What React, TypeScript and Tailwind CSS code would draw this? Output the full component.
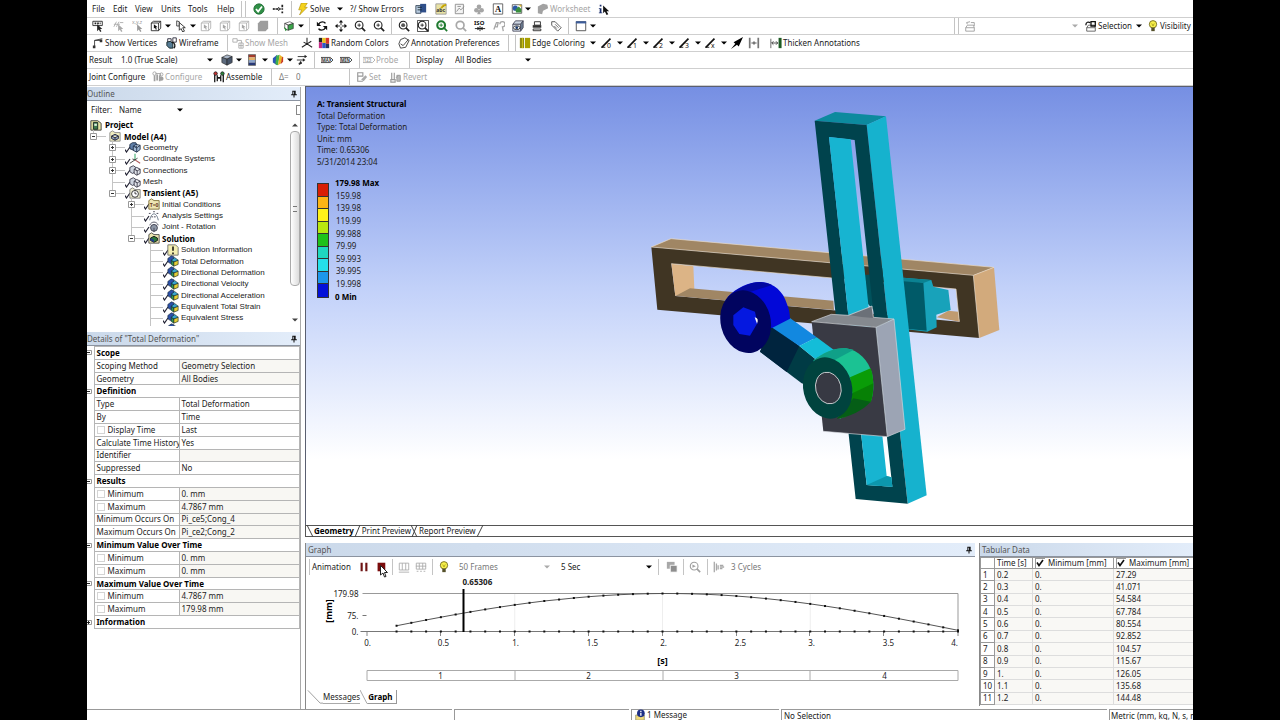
import React from "react";

type IconName = keyof typeof art;

const cube = (top: string, left: string, right: string) => (
  <>
    <path d="M2 4 L8 2 L12 4 L6 6Z" fill={top} stroke="#222" strokeWidth=".7" />
    <path d="M2 4 L6 6 V12 L2 10Z" fill={left} stroke="#222" strokeWidth=".7" />
    <path d="M6 6 L12 4 V10 L6 12Z" fill={right} stroke="#222" strokeWidth=".7" />
  </>
);
const wireBox = (c: string, fill: string) => (
  <>
    <path d="M1.500 3.500 L4 1.500 H12.500 V9.500 L10 12.500 H1.500Z M1.500 3.500 H10 V12.500 M10 3.500 L12.500 1.500" fill="none" stroke={c} />
    <path d="M4.500 5 L9 8.500 H7 L8 11 L6.500 11 L6 9 L4.500 10Z" fill={fill} />
  </>
);
const lens = (c: string, w: number, plus: boolean) => (
  <>
    <circle cx="6" cy="6" r="4.500" fill="none" stroke={c} strokeWidth={w} />
    <path d="M9 9 L13 13" stroke={c} strokeWidth="2" />
    {plus && <path d="M4 6 H8 M6 4 V8" stroke={c} />}
  </>
);
const cursor = (c: string) => <path d="M6 5 V13 L8 11 L9.500 14 L11 13 L9.500 10.500 H12Z" fill={c} />;
const slash = (n: string) => (
  <>
    <path d="M1 12 L11 2" stroke="#111" strokeWidth="2" />
    <path d="M0 12 H5" stroke="#111" />
    <text x="7" y="13" fontSize="8" fill="#111">{n}</text>
  </>
);
const tag = (label: string, c: string) => (
  <>
    <path d="M0 4 H11 L14 7 L11 10 H0Z" fill="#fff" stroke={c} />
    <text x="1" y="9" fontSize="5" fontWeight="700" fill={c}>{label}</text>
  </>
);
const solver = (c: string, d: string) => (
  <>
    <path d="M3 5 V12 M6 4 V11 M9 5 V12" stroke={c} strokeWidth="2" />
    <circle cx="3" cy="3" r="2" fill="#fff" stroke={c} />
    <path d="M4 3 H10 V6" stroke={c} fill="none" />
    <circle cx="11" cy="9" r="2.500" fill={d} />
    <circle cx="11" cy="4" r="1.800" fill="none" stroke={c} />
  </>
);

const art = {
  check: (
    <>
      <circle cx="7" cy="7" r="6" fill="#2f8f46" stroke="#1c6a31" />
      <path d="M3.500 7 L6 10 L10.500 4" stroke="#fff" strokeWidth="2" fill="none" />
    </>
  ),
  nodes: (
    <>
      <path d="M1 7 H10 M10 7 L7 5 M10 7 L7 9" stroke="#222" fill="none" />
      <path d="M1 6h2v2H1z M5 6h2v2H5z M11 2h2v3h-2z M11 6h2v2h-2z M11 10h2v2h-2z" fill="#222" />
    </>
  ),
  bolt: <path d="M5 0 H12 L9 5 H12 L3 14 L5.500 8 H2Z" fill="#f5d21c" stroke="#a98a00" strokeWidth=".7" />,
  newSection: (
    <>
      <path d="M1 3 H7 V12 H1Z" fill="#b8cbe0" stroke="#345" />
      <path d="M6 1 H13 V11 H6Z" fill="#2f4f8a" />
      <path d="M3 5 H8 M3 8 H8" stroke="#122" />
    </>
  ),
  comment: (
    <>
      <path d="M1 1 H13 V13 H1Z" fill="#e8e2a4" stroke="#999" />
      <text x="1.500" y="10" fontSize="6" fontWeight="700" fill="#333">abc</text>
      <path d="M7 6 L10 3 L13 2" stroke="#c9a800" strokeWidth="2" />
    </>
  ),
  figure: (
    <>
      <path d="M1.500 1.500 H11 V12.500 H1.500Z" fill="#f4f4f4" stroke="#888" />
      <path d="M3 10 L6 6 L8 8 L12 4 M4 4 H8" stroke="#888" fill="none" />
    </>
  ),
  clover: (
    <>
      <circle cx="7" cy="4.500" r="2.700" fill="#a5a5a5" />
      <circle cx="4" cy="8.500" r="2.700" fill="#a5a5a5" />
      <circle cx="10" cy="8.500" r="2.700" fill="#a5a5a5" />
      <path d="M6.300 8 H7.700 L9 13 H5Z" fill="#a5a5a5" />
    </>
  ),
  letterA: (
    <>
      <path d="M1.500 1 V13 H12.500 V1Z" fill="#fff" stroke="#555" />
      <text x="3.500" y="10.500" fontSize="10" fontWeight="700" fontFamily="Liberation Serif" fill="#111">A</text>
    </>
  ),
  image: (
    <>
      <path d="M1.500 2 H12.500 V12 H1.500Z" fill="#fff" stroke="#555" />
      <circle cx="5" cy="6" r="3" fill="#2c59a8" />
      <path d="M5 8 L9 4 L12 7 V11 H6Z" fill="#3a8f3e" />
      <path d="M9 2 H12 V5Z" fill="#e0b92d" />
    </>
  ),
  worksheet: <path d="M1 4 L7 1 L12 2 L13 6 L7 9 L6 13 L1 12Z" fill="#a2a2a2" />,
  info: (
    <>
      <path d="M2 2 h2 v2 h-2z M1 6 h3 v5 h1 v1 H1 v-1 h1 V7 H1z" fill="#1b2f6e" />
      <path d="M6 3 V12 L8 10 L10 14 L12 13 L10 9.500 H13Z" fill="#111" />
    </>
  ),
  rst: (
    <>
      <path d="M1 1.500 H12 V6.500 H1Z" fill="#fff" stroke="#222" />
      <path d="M3 4 H10" stroke="#222" strokeWidth="2" strokeDasharray="2 1" />
      {cursor("#222")}
    </>
  ),
  hash: (
    <>
      <path d="M1 8 L4 2 M4 8 L7 2 M1 5 H8 M8 3 H12" stroke="#aaa" />
      {cursor("#aaa")}
    </>
  ),
  xyz: (
    <>
      <text x="0" y="5" fontSize="6" fill="#999">x,y,z</text>
      {cursor("#999")}
    </>
  ),
  boxCursor: wireBox("#222", "#111"),
  boxGray: wireBox("#b0b0b0", "#a5a5a5"),
  bodyGray: <path d="M1 4 L4 1 H13 V10 L10 13 H1Z" fill="#9d9d9d" />,
  pointer: (
    <>
      <path d="M2 1 V7 H5 V2Z" fill="none" stroke="#333" />
      <path d="M5 3 V12 L7 10 L9 14 L11 13 L9 9 H12Z" fill="#fff" stroke="#222" />
    </>
  ),
  greenBox: (
    <>
      {cube("#fff", "#fff", "#3aa54a")}
      <path d="M1 8 L5 11 L3 13Z" fill="#2e8b3a" />
    </>
  ),
  rotate: (
    <>
      <path d="M3 5 C5 1 10 2 11 4 M11 9 C9 13 4 12 3 10" stroke="#111" strokeWidth="1.600" fill="none" />
      <path d="M1 2 V7 H6Z M13 12 V7 H8Z" fill="#111" />
    </>
  ),
  move: (
    <>
      <path d="M7 1 V13 M1 7 H13" stroke="#111" strokeDasharray="5 2" />
      <path d="M7 0 L9.500 3 H4.500Z M7 14 L9.500 11 H4.500Z M0 7 L3 4.500 V9.500Z M14 7 L11 4.500 V9.500Z" fill="#111" />
    </>
  ),
  zoomPlus: lens("#222", 1.300, true),
  zoomFit: (
    <>
      {lens("#222", 1.300, false)}
      <circle cx="6" cy="6" r="2.300" fill="#555" />
    </>
  ),
  zoomBox: (
    <>
      <path d="M.5 .5 H13.500 V13.500 H.5Z" fill="none" stroke="#333" />
      {lens("#222", 1.300, true)}
    </>
  ),
  zoomGreen: lens("#1f7a2f", 2.500, true),
  zoomGray: lens("#a8a8a8", 2, false),
  iso: (
    <>
      <text x="0" y="6" fontSize="7" fontWeight="700" fill="#111">ISO</text>
      <path d="M1 10 H13 M7 7 V13" stroke="#111" />
      <path d="M4 8 L7 10 L4 12Z M10 8 L7 10 L10 12Z" fill="#111" />
    </>
  ),
  eyes: <path d="M1 11 L4 3 H6 L5 8 H3 M8 5 A3 3 0 1 1 11 8 L12 13" fill="none" stroke="#a5a5a5" strokeWidth="1.500" />,
  cubeEye: (
    <>
      <path d="M1 5 L4 1 H13 L10 5Z" fill="#cfd8e4" stroke="#445" />
      <path d="M10 5 L13 1 V9 L10 13Z" fill="#6f8296" stroke="#445" />
      <path d="M1 5 H10 V13 H1Z" fill="#dfe8f2" stroke="#445" />
      <ellipse cx="5.500" cy="9" rx="3.800" ry="2.200" fill="#fff" stroke="#222" />
      <circle cx="5.500" cy="9" r="1.600" fill="#1d3b6e" />
    </>
  ),
  printer: (
    <>
      <path d="M4 2 H11 V6 H4Z" fill="#fff" stroke="#222" />
      <path d="M2 6 H12 V9 H2Z" fill="#333" />
      <path d="M2.500 10.500 H11.500 V12.500 H2.500Z" fill="#fff" stroke="#222" />
    </>
  ),
  label: (
    <>
      <path d="M2 2 L6 2 L13 9 L9 13 L2 6Z" fill="#fff" stroke="#444" />
      <path d="M6 5 L10 9 M5 7 L8 10" stroke="#666" />
    </>
  ),
  win: (
    <>
      <path d="M1.500 2 H12.500 V12.500 H1.500Z" fill="#fff" stroke="#444" />
      <path d="M1 1.500 H13 V4 H1Z" fill="#3c5c9a" />
    </>
  ),
  pick: <path d="M2 9 H12 V13 H2Z M2 9 L4 6 H11 L12 9 M4 5 L3 3 L7 2 M8 3 H12 V7" fill="none" stroke="#999" />,
  pickDark: (
    <>
      <path d="M2 9 H12 V13 H2Z M2 9 L4 6 H11 L12 9" fill="#fff" stroke="#555" />
      <path d="M1 6 C1 2 4 2 6 3 M7 2 H12 V7 H7Z" fill="none" stroke="#111" strokeWidth="1.500" />
    </>
  ),
  bulb: (
    <>
      <circle cx="7" cy="5" r="4.300" fill="#f7f04a" stroke="#6b6420" />
      <path d="M5 9 H9 V13 H5Z" fill="#55512a" />
      <path d="M5.500 4 L7 7 L8.500 4" fill="none" stroke="#a99f1e" />
    </>
  ),
  vertex: (
    <>
      <path d="M3 11 V4 H11 M3 4 L12 2" fill="none" stroke="#333" />
      <path d="M1 10h3v3H1z M9 3h3v3H9z" fill="#333" />
    </>
  ),
  wire: (
    <>
      <path d="M2 2 h4 v4 h-4z M8 1 h4 v5 h-4z" fill="none" stroke="#223" />
      <path d="M1 6 L5 5 L8 8 V13 H4 L1 10Z" fill="#557b94" stroke="#122" />
      <path d="M7 6 A4 4 0 0 1 9 13" fill="none" stroke="#111" strokeWidth="1.500" />
    </>
  ),
  mesh: <path d="M1 2 h5 v4 h-5z M8 7 h5 v6 h-5z M8 10 h5 M10.500 7 v6 M6 4 h5 v3" fill="none" stroke="#aaa" />,
  axes: <path d="M7 1 V8 L1 12 M7 8 L13 12 M3 6 L7 8 L12 5" fill="none" stroke="#222" strokeWidth="1.200" />,
  colors: (
    <>
      <path d="M1 1h4v5H1z" fill="#222" />
      <path d="M5 1h4v6H5z" fill="#e8c51c" />
      <path d="M9 1h4v7H9z" fill="#d9362b" />
      <path d="M1 6h4v7H1z" fill="#c42d85" />
      <path d="M5 7h4v6H5z" fill="#2d56c9" />
      <path d="M9 8h4v5H9z" fill="#26365e" />
    </>
  ),
  pen: <path d="M3 3 L8 1 L13 4 L9 12 L3 13 L1 8Z M3 8 L6 10 L12 3" fill="none" stroke="#333" />,
  edge: (
    <>
      <path d="M1 1h5v12H1z" fill="#8f8a12" />
      <path d="M7 1h6v12H7z" fill="#a89f00" />
      <path d="M4 1v12" stroke="#d6cb1c" />
    </>
  ),
  s0: slash("0"),
  s1: slash("1"),
  s2: slash("2"),
  s3: slash("3"),
  sx: slash("x"),
  dart: <path d="M0 14 L5 8 L3 6 L14 0 L9 11 L7 9Z" fill="#000" />,
  gap: (
    <>
      <path d="M2 1 V13 M12 1 V13" stroke="#777" strokeWidth="2" />
      <path d="M4 7 H10 M7 5 V9" stroke="#333" />
    </>
  ),
  thick: (
    <>
      <path d="M1 2 V13" stroke="#555" />
      <path d="M2 7 H9" stroke="#333" />
      <path d="M4 5 L2 7 L4 9 M7 5 L9 7 L7 9" stroke="#333" fill="none" />
      <path d="M10 1 H13.500 V13 H10Z" fill="#1d5a23" />
    </>
  ),
  cubeGray: (
    <>
      <path d="M1 4 L7 1 L13 3 L7 6Z" fill="#a9b6c8" stroke="#222" strokeWidth=".7" />
      <path d="M1 4 L7 6 V13 L1 10Z" fill="#5d6b7e" stroke="#222" strokeWidth=".7" />
      <path d="M7 6 L13 3 V10 L7 13Z" fill="#47556a" stroke="#222" strokeWidth=".7" />
    </>
  ),
  bars: (
    <>
      <path d="M3 1h8v3H3z" fill="#a43c2c" />
      <path d="M3 4h8v3H3z" fill="#e2b36b" />
      <path d="M3 7h8v3H3z" fill="#8fa6c8" />
      <path d="M3 10h8v3H3z" fill="#283a78" />
      <path d="M3 .5 H11 V13.500 H3Z" fill="none" stroke="#333" strokeWidth=".7" />
    </>
  ),
  rainbow: (
    <>
      <path d="M1 5 L6 1 L6 13 L1 10Z" fill="#2b57b5" />
      <path d="M5 2 L9 1 L7 13 L4 12Z" fill="#43b049" />
      <path d="M9 1 L13 4 L10 11 L7 13Z" fill="#ecb52a" />
      <path d="M12 3 L13 4 V9 L10 12Z" fill="#c93a22" />
    </>
  ),
  vectors: (
    <>
      <path d="M2 3 H11 M1 7 H9 M3 11 H6 V9" stroke="#222" fill="none" />
      <path d="M10 1 L13 3 L10 5Z M8 5 L11 7 L8 9Z M5 8 L7 11 L3 13Z" fill="#222" />
    </>
  ),
  max: tag("MAX", "#333"),
  min: tag("MIN", "#333"),
  probe: tag("123", "#aaa"),
  cfgGray: solver("#a0a0a0", "#a0a0a0"),
  assemble: (
    <>
      <path d="M2 4 V13 M5 5 V12 M12 4 V13 M9 5 V12" stroke="#222" strokeWidth="1.600" />
      <circle cx="3" cy="3" r="2" fill="#c33" stroke="#222" />
      <circle cx="11" cy="3" r="2" fill="#2a8a3a" stroke="#222" />
      <path d="M5 8 H9" stroke="#111" strokeWidth="2" />
    </>
  ),
  setGray: (
    <>
      <path d="M2 2 H8 V6 H2Z M2 6 V12 H8" fill="none" stroke="#999" strokeWidth="1.300" />
      <path d="M6 10 L11 5 L13 7 L9 12Z" fill="#aaa" />
    </>
  ),
  revert: (
    <>
      <path d="M2 2 V10 M5 2 V10 M1 10 H6 V13 H1Z" stroke="#999" fill="none" strokeWidth="1.300" />
      <path d="M8 5 H12 V12 H8Z M7 8 L10 5" stroke="#999" fill="#bbb" />
    </>
  ),
  project: (
    <>
      <path d="M1 2 H9 L13 5 V13 H1Z" fill="#e5e3a2" stroke="#333" />
      <path d="M4 4 H9 V12 H4Z" fill="#3d7a4c" stroke="#122" />
      <path d="M5 5.500 H8 V8 H5Z" fill="#dff0df" />
    </>
  ),
  model: (
    <>
      <path d="M1 3 L4 1 L7 3 H13 V13 H1Z" fill="#efedc0" stroke="#888" />
      <path d="M3 7 L7 5 L11 7 V10 L7 12 L3 10Z M3 7 L7 9 L11 7 M7 9 V12" fill="#8fa3bd" stroke="#223" />
    </>
  ),
  geom: (
    <>
      <path d="M1 4 L4 2 H8 L9 4 V9 L6 11 L1 9Z" fill="#5f7fa8" stroke="#1b2b45" />
      <path d="M5 6 L8 4 L13 5 V10 L9 13 L5 11Z M5 6 L9 8 L13 5 M9 8 V13" fill="#9fb8d4" stroke="#1b2b45" />
    </>
  ),
  coord: (
    <>
      <path d="M7 1 V8" stroke="#3a6" strokeWidth="1.200" />
      <path d="M7 8 L13 12" stroke="#a55" strokeWidth="1.200" />
      <path d="M7 8 L1 12 M4 7 L7 8 L10 6" stroke="#333" fill="none" />
    </>
  ),
  conn: (
    <>
      <path d="M1 4 L5 2 L8 4 V9 L4 11 L1 9Z" fill="#cdd4df" stroke="#334" />
      <path d="M6 6 L9 4 L13 6 V11 L9 13 L6 11Z M6 6 L9.500 8 L13 6 M9.500 8 V13" fill="#e3e6ec" stroke="#334" />
    </>
  ),
  clock: (
    <>
      <path d="M1 3 L4 1 L7 3 H13 V13 H1Z" fill="#efedd0" stroke="#777" />
      <circle cx="7" cy="8" r="4" fill="#fff" stroke="#222" />
      <path d="M7 5.500 V8 H9" fill="none" stroke="#222" />
    </>
  ),
  initial: (
    <>
      <path d="M1 3 L4 1 L7 3 H13 V13 H1Z" fill="#efe6b4" stroke="#7a6a30" />
      <text x="2" y="11" fontSize="6" fontWeight="700" fill="#6b3a22">T=0</text>
    </>
  ),
  settings: (
    <>
      <path d="M2 12 C4 2 10 2 12 12" fill="none" stroke="#567" />
      <path d="M1 4h3 M6 2h3 M10 4h3 M4 8h6" stroke="#334" strokeDasharray="2 1" />
    </>
  ),
  joint: (
    <>
      <circle cx="7" cy="8" r="4" fill="#8e97a6" stroke="#334" />
      <path d="M2 5 C4 0 10 0 12 5 M7 8 V13" fill="none" stroke="#445" />
    </>
  ),
  solution: (
    <>
      <path d="M1 3 L4 1 L7 3 H13 V13 H1Z" fill="#e9e3b0" stroke="#444" />
      <path d="M3 7 L7 5 L11 7 V10 L7 12 L3 10Z" fill="#2c7a3c" stroke="#111" />
      <path d="M3 7 L7 9 V12 L3 10Z" fill="#24408a" />
    </>
  ),
  note: (
    <>
      <path d="M1 1 H10 L13 4 V13 H1Z" fill="#f3eeb0" stroke="#666" />
      <path d="M7 3 V8 M7 10 V12" stroke="#111" strokeWidth="1.800" />
    </>
  ),
  result: (
    <>
      <path d="M1 4 L5 1 L8 2 V9 L4 10 L1 8Z" fill="#2b50a8" stroke="#123" strokeWidth=".7" />
      <path d="M5 6 L8 8 V13 L5 11Z" fill="#2d9a56" stroke="#122" strokeWidth=".7" />
      <path d="M8 8 L13 6 V11 L8 13Z" fill="#e4cf36" stroke="#122" strokeWidth=".7" />
      <path d="M5 6 L9 3 L13 6 L8 8Z" fill="#38a6cf" stroke="#122" strokeWidth=".7" />
    </>
  ),
  pin: <path d="M4 2 H10 M5 2 V8 M9 2 V8 M8 2 V8 M2 8.500 H12 M7 9 V13" stroke="#111" strokeWidth="1.800" fill="none" />,
  pause: <path d="M3 2 H5.500 V12 H3Z M8.500 2 H11 V12 H8.500Z" fill="#6e1414" />,
  stop: <path d="M3 2 H12 V12 H3Z" fill="#7a0c0c" />,
  frames: <path d="M1.500 2.500 H12.500 V10.500 H1.500Z M5 2.500 V10.500 M9 2.500 V10.500 M1 13 H13" fill="none" stroke="#aaa" />,
  frames2: <path d="M1.500 2.500 H12.500 V9.500 H1.500Z M5 2.500 V9.500 M9 2.500 V9.500 M1 6 H13 M2 12 H4 M6 12 H8 M10 12 H12" fill="none" stroke="#aaa" />,
  export: (
    <>
      <path d="M1 1h9v8H1z" fill="#a8a8a8" />
      <path d="M5 5h8v8H5z" fill="#8e8e8e" stroke="#fff" />
    </>
  ),
  zoomTime: (
    <>
      {lens("#a0a0a0", 1.300, false)}
      <path d="M4 4 L8 6 L4 8Z" fill="#a0a0a0" />
    </>
  ),
  cycles: <path d="M1.500 1 V13 M4 3 V11 M6 5 V10 M8 5 H12 M8 7 H13 M8 9 H11" stroke="#a8a8a8" strokeWidth="1.500" />,
  message: (
    <>
      <path d="M2 7 H12 V13 H2Z" fill="#f0d878" stroke="#997" />
      <circle cx="8" cy="5" r="4.500" fill="#1d2f86" />
      <path d="M8 2 V3.500 M8 4.500 V8" stroke="#fff" strokeWidth="1.500" />
    </>
  ),
};

const Icon = ({ name, className = "size-3" }: { name: IconName; className?: string }) => (
  <svg viewBox="0 0 14 14" className={`${className} shrink-0`} aria-hidden="true">{art[name]}</svg>
);

const Caret = ({ className = "text-black" }: { className?: string }) => (
  <svg viewBox="0 0 6 4" className={`h-1 w-1.5 shrink-0 ${className}`} aria-hidden="true">
    <path d="M0 .5 H6 L3 3.500Z" fill="currentColor" />
  </svg>
);

const Sep = ({ w = "w-1" }: { w?: string }) => (
  <span className={`flex shrink-0 justify-center ${w}`}>
    <span className="h-4 w-px bg-[#c4c4c4]" />
  </span>
);

// Fixed-width toolbar cell: optional icon followed by an optional caption.
const Tool = ({ w = "w-[19px]", icon, text, label, off = false }: { w?: string; icon?: IconName; text?: string; label?: string; off?: boolean }) => (
  <button
    type="button"
    aria-label={label ?? text ?? icon}
    disabled={off}
    className={`flex h-4 shrink-0 items-center whitespace-nowrap ${text ? "gap-px" : "justify-center"} ${off ? "text-[#a6a6a6]" : "text-[#222]"} ${w}`}
  >
    {icon && <Icon name={icon} />}
    {text}
  </button>
);

const Drop = ({ w = "w-2.5", off = false }: { w?: string; off?: boolean }) => (
  <button type="button" aria-label="More options" className={`flex h-4 shrink-0 items-center justify-center ${w}`}>
    <Caret className={off ? "text-[#aaa]" : "text-black"} />
  </button>
);

const Bar = ({ children }: { children: React.ReactNode }) => (
  <div className="flex h-[17px] items-center overflow-hidden border-b border-[#cfcfcf] bg-white text-[8px]">{children}</div>
);

const Toolbars = () => (
  <header className="shrink-0 bg-white pt-px">
    <Bar>
      <nav className="flex w-[152px] shrink-0 pl-[5px]">
        <button type="button" className="w-[21px] text-left">File</button>
        <button type="button" className="w-[22px] text-left">Edit</button>
        <button type="button" className="w-[26px] text-left">View</button>
        <button type="button" className="w-[27px] text-left">Units</button>
        <button type="button" className="w-[29px] text-left">Tools</button>
        <button type="button" className="text-left">Help</button>
      </nav>
      <Sep w="w-1" />
      <Sep w="w-1" />
      <Tool w="w-6" icon="check" label="Status" />
      <Tool w="w-3.5" icon="nodes" label="Connections" />
      <Sep w="w-3" />
      <Tool w="w-[39px]" icon="bolt" text="Solve" />
      <Drop w="w-2" />
      <span className="w-1.5 shrink-0" />
      <Tool w="w-[61px]" text="?/ Show Errors" />
      <Tool w="w-5" icon="newSection" label="New section plane" />
      <Tool icon="comment" label="Comment" />
      <Tool icon="figure" label="Figure" />
      <Tool icon="clover" label="Clover" />
      <Tool icon="letterA" label="Annotation" />
      <Tool icon="image" label="Image" />
      <Drop w="w-1" />
      <span className="w-[7px] shrink-0" />
      <Tool w="w-[61px]" icon="worksheet" text="Worksheet" off />
      <Tool w="w-3" icon="info" label="Selection information" />
    </Bar>
    <Bar>
      <Tool w="w-[22px]" icon="rst" label="Named selection" />
      <Tool icon="hash" label="Select by number" off />
      <Tool icon="xyz" label="Coordinates" off />
      <Tool w="w-[18px]" icon="boxCursor" label="Select mode" />
      <Drop w="w-1.5" />
      <Tool icon="pointer" label="Pointer" />
      <Drop w="w-1.5" />
      <Tool icon="boxGray" label="Vertex" off />
      <Tool icon="boxGray" label="Edge" off />
      <Tool icon="boxGray" label="Face" off />
      <Tool icon="bodyGray" label="Body" off />
      <Sep w="w-2.5" />
      <Tool w="w-3.5" icon="greenBox" label="Extend selection" />
      <Drop />
      <Sep w="w-1.5" />
      <Tool icon="rotate" label="Rotate" />
      <Tool icon="move" label="Pan" />
      <Tool icon="zoomPlus" label="Zoom" />
      <Tool icon="zoomPlus" label="Box zoom" />
      <Sep w="w-1.5" />
      <Tool icon="zoomFit" label="Zoom to fit" />
      <Tool icon="zoomBox" label="Magnifier" />
      <Tool icon="zoomGreen" label="Previous view" />
      <Tool icon="zoomGray" label="Next view" off />
      <Tool icon="iso" label="Isometric view" />
      <Tool icon="eyes" label="Look at" off />
      <Tool icon="cubeEye" label="Manage views" />
      <Tool icon="printer" label="Rescale" />
      <Tool icon="label" label="Tags" />
      <Sep w="w-1.5" />
      <Tool icon="win" label="Viewports" />
      <Drop w="w-1.5" />
      <span className="grow" />
      <div className="flex w-[241px] shrink-0 items-center">
        <Sep />
        <Sep />
        <Tool icon="pick" label="Pick" off />
        <span className="w-[92px] shrink-0" />
        <Drop w="w-2" off />
        <span className="w-1.5 shrink-0" />
        <Tool w="w-[50px]" icon="pickDark" text="Selection" />
        <Drop w="w-2" />
        <span className="w-1 shrink-0" />
        <Tool w="w-11" icon="bulb" text="Visibility" />
      </div>
    </Bar>
    <Bar>
      <span className="w-[5px] shrink-0" />
      <Tool w="w-[74px]" icon="vertex" text="Show Vertices" />
      <Tool w="w-[57px]" icon="wire" text="Wireframe" />
      <Sep w="w-[9px]" />
      <Tool w="w-[64px]" icon="mesh" text="Show Mesh" off />
      <Tool w="w-[22px]" icon="axes" label="Axes" />
      <Tool w="w-[80px]" icon="colors" text="Random Colors" />
      <Tool w="w-[106px]" icon="pen" text="Annotation Preferences" />
      <Sep w="w-[8px]" />
      <Sep w="w-[7px]" />
      <Tool w="w-[70px]" icon="edge" text="Edge Coloring" />
      <Drop w="w-[8px]" />
      <Tool w="w-5" icon="s0" label="Edges free" />
      <Drop w="w-1.5" />
      <Tool w="w-5" icon="s1" label="Edges single" />
      <Drop w="w-1.5" />
      <Tool w="w-5" icon="s2" label="Edges double" />
      <Drop w="w-1.5" />
      <Tool w="w-5" icon="s3" label="Edges triple" />
      <Drop w="w-1.5" />
      <Tool w="w-5" icon="sx" label="Edges multiple" />
      <Drop w="w-1.5" />
      <Tool icon="dart" label="Direction" />
      <Tool w="w-4" icon="gap" label="Spacing" />
      <span className="w-2 shrink-0" />
      <Tool w="w-[110px]" icon="thick" text="Thicken Annotations" />
    </Bar>
    <Bar>
      <span className="w-8 shrink-0 pl-0.5">Result</span>
      <span className="w-[84px] shrink-0 pl-0.5">1.0 (True Scale)</span>
      <Drop w="w-[14px]" />
      <Tool icon="cubeGray" label="Geometry" />
      <Drop w="w-[6px]" />
      <Tool w="w-5" icon="bars" label="Contours" />
      <Drop w="w-[6px]" />
      <Tool w="w-5" icon="rainbow" label="Edges" />
      <Drop w="w-[4px]" />
      <Tool icon="vectors" label="Vectors" />
      <Sep w="w-[6px]" />
      <Tool icon="max" label="Maximum" />
      <Tool icon="min" label="Minimum" />
      <Sep w="w-2" />
      <Tool w="w-[43px]" icon="probe" text="Probe" off />
      <Sep w="w-1.5" />
      <label htmlFor="display" className="w-[39px] shrink-0 pl-1">Display</label>
      <span className="grid w-[84px] shrink-0 items-center">
        <select id="display" className="col-start-1 row-start-1 appearance-none bg-transparent pl-1">
          <option>All Bodies</option>
        </select>
        <span className="pointer-events-none col-start-1 row-start-1 justify-self-end pr-1"><Caret /></span>
      </span>
    </Bar>
    <Bar>
      <span className="w-[65px] shrink-0 pl-0.5">Joint Configure</span>
      <Tool w="w-[61px]" icon="cfgGray" text="Configure" off />
      <Tool w="w-[54px]" icon="assemble" text="Assemble" />
      <Sep w="w-[8px]" />
      <label htmlFor="delta" className="w-[21px] shrink-0 pl-1 text-[#777]">Δ=</label>
      <input id="delta" defaultValue="0" className="w-[50px] shrink-0 text-[#777] outline-none" />
      <Sep w="w-[6px]" />
      <span className="w-1 shrink-0" />
      <Tool w="w-[34px]" icon="setGray" text="Set" off />
      <Tool w="w-[50px]" icon="revert" text="Revert" off />
    </Bar>
  </header>
);

const PanelTitle = ({ children, pin = true, pad = "pl-0.5" }: { children: React.ReactNode; pin?: boolean; pad?: string }) => (
  <h2 className={`flex h-[14px] shrink-0 items-center justify-between overflow-hidden whitespace-nowrap border-b border-[#8b93a0] bg-linear-to-r from-[#cbd9ea] to-[#e3edfa] pr-0.5 text-[8px] text-[#555] ${pad}`}>
    {children}
    {pin && <Icon name="pin" className="size-2" />}
  </h2>
);

type Node = { depth: number; icon: IconName; text: string; box?: "+" | "-"; bold?: boolean; last?: boolean };
const tree: Node[] = [
  { depth: 0, icon: "project", text: "Project", bold: true },
  { depth: 1, icon: "model", text: "Model (A4)", box: "-", bold: true, last: true },
  { depth: 2, icon: "geom", text: "Geometry", box: "+" },
  { depth: 2, icon: "coord", text: "Coordinate Systems", box: "+" },
  { depth: 2, icon: "conn", text: "Connections", box: "+" },
  { depth: 2, icon: "conn", text: "Mesh" },
  { depth: 2, icon: "clock", text: "Transient (A5)", box: "-", bold: true, last: true },
  { depth: 3, icon: "initial", text: "Initial Conditions", box: "+" },
  { depth: 3, icon: "settings", text: "Analysis Settings" },
  { depth: 3, icon: "joint", text: "Joint - Rotation" },
  { depth: 3, icon: "solution", text: "Solution", box: "-", bold: true, last: true },
  { depth: 4, icon: "note", text: "Solution Information" },
  { depth: 4, icon: "result", text: "Total Deformation" },
  { depth: 4, icon: "result", text: "Directional Deformation" },
  { depth: 4, icon: "result", text: "Directional Velocity" },
  { depth: 4, icon: "result", text: "Directional Acceleration" },
  { depth: 4, icon: "result", text: "Equivalent Total Strain" },
  { depth: 4, icon: "result", text: "Equivalent Stress" },
  { depth: 4, icon: "result", text: "" },
];

const TreeRow = ({ n }: { n: Node }) => (
  <li className="flex min-h-0 items-center whitespace-nowrap">
    {Array.from({ length: n.depth }, (_, i) => (
      <svg key={i} viewBox="0 0 19 12" className="h-3 w-[19px] shrink-0" aria-hidden="true">
        {i === n.depth - 1 && (
          <>
            <path d={n.last ? "M6.500 0 V6" : "M6.500 0 V12"} stroke="#c4c4c4" />
            <path d="M6 6.500 H19" stroke="#c4c4c4" />
            {n.box && (
              <>
                <path d="M3.500 3.500 H9.500 V9.500 H3.500Z" fill="#fff" stroke="#999" />
                <path d={n.box === "+" ? "M5 6.500 H8 M6.500 5 V8" : "M5 6.500 H8"} stroke="#333" />
              </>
            )}
          </>
        )}
      </svg>
    ))}
    <svg viewBox="0 0 18 12" className="h-3 w-[18px] shrink-0" aria-hidden="true">
      {n.depth > 1 && <path d="M0 8.500 L1.500 11 L5 6" fill="none" stroke="#223" strokeWidth="1.200" />}
      <svg x={n.depth > 1 ? 4 : 3} y="0" width="12" height="12" viewBox="0 0 14 14">{art[n.icon]}</svg>
    </svg>
    <span className={n.bold ? "font-bold text-black" : "font-['Liberation_Sans',Arial,sans-serif] text-[#222]"}>{n.text}</span>
  </li>
);

const Outline = () => (
  <section className="flex h-[245px] shrink-0 flex-col border-r border-[#aaa] bg-white">
    <PanelTitle pad="">Outline</PanelTitle>
    <div className="flex h-[18px] shrink-0 items-center pl-1 text-[8px]">
      <label htmlFor="filter" className="w-7">Filter:</label>
      <span className="grid w-16 items-center">
        <select id="filter" className="col-start-1 row-start-1 appearance-none bg-transparent">
          <option>Name</option>
        </select>
        <span className="pointer-events-none col-start-1 row-start-1 justify-self-end"><Caret /></span>
      </span>
      <span className="grow" />
      <span className="h-2.5 w-1 border-y border-l border-[#888]" />
    </div>
    <div className="flex h-[207px] overflow-hidden">
      <ul className="grid h-[216px] flex-1 auto-rows-fr overflow-hidden text-[8px] leading-[11px]">
        {tree.map((n, i) => <TreeRow key={i} n={n} />)}
      </ul>
      <div className="flex w-2.5 flex-col items-center justify-between py-1" aria-hidden="true">
        <Caret className="rotate-180 text-[#444]" />
        <span className="mb-8 mt-1 flex w-full flex-1 items-center justify-center rounded-sm border border-[#aaa] bg-linear-to-r from-white to-[#dcdcdc]">
          <span className="h-1.5 w-1 border-y border-[#777]" />
        </span>
        <Caret className="text-[#444]" />
      </div>
    </div>
  </section>
);

type Detail = { head: string; box: "+" | "-" } | { k: string; v: string; tick?: boolean; dim?: boolean };
const details: Detail[] = [
  { head: "Scope", box: "-" },
  { k: "Scoping Method", v: "Geometry Selection", dim: true },
  { k: "Geometry", v: "All Bodies", dim: true },
  { head: "Definition", box: "-" },
  { k: "Type", v: "Total Deformation" },
  { k: "By", v: "Time" },
  { k: "Display Time", v: "Last", tick: true },
  { k: "Calculate Time History", v: "Yes" },
  { k: "Identifier", v: "", dim: true },
  { k: "Suppressed", v: "No" },
  { head: "Results", box: "-" },
  { k: "Minimum", v: "0. mm", tick: true, dim: true },
  { k: "Maximum", v: "4.7867 mm", tick: true, dim: true },
  { k: "Minimum Occurs On", v: "Pi_ce5;Cong_4", dim: true },
  { k: "Maximum Occurs On", v: "Pi_ce2;Cong_2", dim: true },
  { head: "Minimum Value Over Time", box: "-" },
  { k: "Minimum", v: "0. mm", tick: true, dim: true },
  { k: "Maximum", v: "0. mm", tick: true, dim: true },
  { head: "Maximum Value Over Time", box: "-" },
  { k: "Minimum", v: "4.7867 mm", tick: true, dim: true },
  { k: "Maximum", v: "179.98 mm", tick: true, dim: true },
  { head: "Information", box: "+" },
];

const Details = () => (
  <section className="flex-1 border-r border-[#aaa] bg-white">
    <PanelTitle pad="">Details of "Total Deformation"</PanelTitle>
    <table className="h-[283px] w-full table-fixed border-collapse text-[8px] leading-[10px] text-[#222]">
      <colgroup>
        <col className="w-[7px]" />
        <col className="w-[85px]" />
        <col />
      </colgroup>
      <tbody>
        {details.map((d, i) =>
          "head" in d ? (
            <tr key={i}>
              <td className="p-0">
                <button type="button" aria-label={`Toggle ${d.head}`} className="block size-[5px]">
                  <svg viewBox="0 0 5 5" className="size-[5px]" aria-hidden="true">
                    <path d="M0 .5 H4.500 V4.500 H0" fill="none" stroke="#999" />
                    <path d={d.box === "+" ? "M0 2.500 H3 M1.500 1 V4" : "M0 2.500 H3"} stroke="#222" />
                  </svg>
                </button>
              </td>
              <td colSpan={2} className="border border-[#b5b5b5] p-0 pl-0.5 font-bold text-black">{d.head}</td>
            </tr>
          ) : (
            <tr key={i}>
              <td className="p-0" />
              <td className="overflow-hidden whitespace-nowrap border border-[#b5b5b5] p-0 pl-0.5">
                {d.tick ? (
                  <label className="flex items-center gap-[3px]">
                    <input type="checkbox" className="size-2 appearance-none border border-[#d4d4d4] bg-white" />
                    {d.k}
                  </label>
                ) : d.k}
              </td>
              <td className={`border border-[#b5b5b5] p-0 pl-0.5 ${d.dim ? "bg-[#f8f7f3]" : "bg-white"}`}>{d.v}</td>
            </tr>
          )
        )}
      </tbody>
    </table>
  </section>
);

const bands = [
  ["bg-[#d81e05]", "159.98"],
  ["bg-[#fdb515]", "139.98"],
  ["bg-[#fff21a]", "119.99"],
  ["bg-[#b9e80f]", "99.988"],
  ["bg-[#1fc21a]", "79.99"],
  ["bg-[#1fd8c0]", "59.993"],
  ["bg-[#25e0ea]", "39.995"],
  ["bg-[#1c97ec]", "19.998"],
  ["bg-[#0411d8]", "0 Min"],
];

const Mechanism = () => (
  <svg viewBox="0 0 1110 1290" className="mt-[3px] h-[430px] w-[370px] shrink-0" role="img" aria-label="Deformed mechanism">
    <g strokeLinejoin="round">
      {/* horizontal slotted guide */}
      <path d="M34 471 L93 446 L1062 532 L1000 556Z" fill="#a08664" />
      <path d="M1000 556 L1062 532 L1078 720 L1018 744Z" fill="#d2aa7c" />
      <path fillRule="evenodd" d="M34 471 L1000 556 L1018 744 L52 659Z M94 521 L106 618 L958 695 L948 597Z" fill="#403523" />
      <path d="M94 521 L160 529 L163 596 L106 618Z" fill="#dcb486" />
      <path d="M106 618 L150 595 L580 632 L582 660Z" fill="#a08664" />
      <path d="M890 682 L925 662 L955 665 L958 695Z" fill="#c09b70" />
      <path d="M34 471 L1000 556 L1062 532 L93 446Z M94 521 L948 597 L958 695 M1000 556 L1018 744" fill="none" stroke="#eddcc4" strokeWidth="2" />
      {/* sliding pin through the guide */}
      <path d="M790 563 L874 570 L880 590 L925 600 L932 660 L889 674 L890 712 L862 725 L800 718Z" fill="#18a2ba" />
      <path d="M790 568 L850 578 L860 722 L800 716Z" fill="#005a68" />
      <path d="M790 563 L874 570 L850 579 L790 574Z" fill="#0b8292" />
      <path d="M674 555 L700 553 L700 660 L682 640Z" fill="#00525c" />
      {/* vertical slotted arm */}
      <path d="M524 92 L585 66 L738 79 L680 105Z" fill="#0c8a9e" />
      <path d="M680 105 L738 79 L860 1216 L803 1241Z" fill="#16b2ce" />
      <path fillRule="evenodd" d="M524 92 L680 105 L803 1241 L647 1227Z M567 141 L680 1185 L757 1190 L644 150Z" fill="#00434d" />
      <path d="M567 141 L632 148 L740 1158 L754 1162 L757 1190 L680 1185Z" fill="#17b4d1" />
      <path d="M680 1185 L740 1158 L754 1162 L757 1190Z" fill="#0c97ad" />
      {/* carriage block */}
      <path d="M515 695 L574 673 L625 676 L696 648 L700 682 L762 687 L708 712Z" fill="#85898f" />
      <path d="M630 676 L694 651 L700 684 L665 681Z" fill="#6b7078" />
      <path d="M515 695 L708 712 L742 1040 L550 1024Z" fill="#393a44" />
      <path d="M708 712 L762 687 L795 1018 L742 1040Z" fill="#9ca4b4" />
      <path d="M515 695 L708 712 L742 1040 L550 1024 M708 712 L762 687 L795 1018 L742 1040 M515 695 L574 673 L625 676 L696 648 L700 682 L762 687" fill="none" stroke="#d4d8de" strokeWidth="2" />
      {/* crank link */}
      <path d="M392 705 L400 710 L478 768 L525 806 L500 885 L485 880 L360 785Z" fill="#003b45" />
      <path d="M392 705 L478 768 L440 846 L360 785Z" fill="#00243e" />
      <path d="M395 712 L450 684 L530 742 L478 768Z" fill="#1288e0" />
      <path d="M478 768 L530 742 L585 782 L525 806Z" fill="#14bdd8" />
      {/* hub with bore */}
      <path d="M262 622 C290 592 330 575 362 576 C400 578 430 605 440 640 C446 655 450 670 450 686 L396 714 L330 700Z" fill="#0208d8" />
      <path d="M268 616 C300 590 335 576 362 576 C375 577 386 580 396 585 L330 606 C310 600 290 602 268 616Z" fill="#0208a0" />
      <ellipse cx="317" cy="695" rx="75" ry="95" transform="rotate(-14 317 695)" fill="#01045f" />
      <path d="M280 676 L310 652 L345 665 L352 700 L330 737 L298 732 L280 705Z" fill="#0518e0" />
      <path d="M344 682 Q358 685 351 701Z" fill="#fff" />
      {/* driven end */}
      <path d="M520 812 C550 786 590 772 618 775 C655 780 685 810 696 850 C702 880 702 910 692 935 L600 986 L550 900Z" fill="#1bc293" />
      <path d="M520 812 C550 786 590 772 618 775 L640 780 L580 812Z" fill="#10a088" />
      <path d="M630 862 L692 835 C702 860 703 910 692 935 L610 984 L640 930Z" fill="#0a9c08" />
      <path d="M637 910 L700 880 C699 905 697 925 692 936 L600 986Z" fill="#078005" />
      <path d="M590 986 L640 925 L692 935 C670 960 630 980 590 986Z" fill="#055e16" />
      <ellipse cx="563" cy="894" rx="73" ry="93" transform="rotate(-14 563 894)" fill="#00433e" />
      <ellipse cx="565" cy="894" rx="38" ry="48" transform="rotate(-14 565 894)" fill="#373943" stroke="#d6d8dc" strokeWidth="2.500" />
    </g>
  </svg>
);

const Viewport = () => (
  <section className="flex h-[439px] shrink-0 overflow-hidden border-l border-t border-[#5a5f70] bg-linear-to-b from-[#768fe3] via-[#c2d1f9] via-46% to-white to-85%">
    <div className="w-[334px] shrink-0 pl-[11px] pt-[11px] text-[8px] text-[#222]">
      <div className="grid h-[69px] auto-rows-fr leading-[11px]">
        <strong className="text-black">A: Transient Structural</strong>
        <span>Total Deformation</span>
        <span>Type: Total Deformation</span>
        <span>Unit: mm</span>
        <span>Time: 0.65306</span>
        <span>5/31/2014 23:04</span>
      </div>
      <div className="mt-[16px] flex gap-[6px]">
        <div className="grid h-[115px] w-3 auto-rows-fr divide-y divide-[#333] border border-[#333]">
          {bands.map(([c]) => <span key={c} className={c} />)}
        </div>
        <div className="-mt-[6px] grid h-[126px] auto-rows-fr items-center leading-[12px]">
          <strong className="text-black">179.98 Max</strong>
          {bands.map(([c, v], i) => (
            <span key={c} className={i === 8 ? "font-bold text-black" : "pl-px"}>{v}</span>
          ))}
        </div>
      </div>
    </div>
    <Mechanism />
  </section>
);

const Slant = ({ d }: { d: string }) => (
  <svg viewBox="0 0 8 12" className="h-3 w-2 shrink-0" aria-hidden="true">
    <path d={d} fill="none" stroke="#444" />
  </svg>
);

const ViewTabs = () => (
  <div className="flex h-[12px] shrink-0 items-center border-y border-l border-[#555] bg-white text-[8px]">
    <Slant d="M1 0 L7 12" />
    <button type="button" className="font-bold text-black">Geometry</button>
    <Slant d="M1 12 L6 0" />
    <button type="button">Print Preview</button>
    <Slant d="M1 12 L6 0 M0 0 L6 12" />
    <button type="button">Report Preview</button>
    <Slant d="M1 12 L7 0" />
  </div>
);

const measured = [27.29, 41.071, 54.584, 67.784, 80.554, 92.852, 104.57, 115.67, 126.05, 135.68, 144.48];
const samples = Array.from({ length: 39 }, (_, i) => {
  const t = 0.2 + i * 0.1;
  const v = measured[i] ?? Math.max(4.79, 179.98 * Math.sin((Math.PI * (t - 0.02)) / 4.02));
  return { t, v };
});
const px = (t: number) => 60.5 + t * 147.75;
const py = (v: number) => 55.5 - (v / 179.98) * 38;

const Chart = () => (
  <svg viewBox="0 0 668 114" className="h-[114px] w-full" role="img" aria-label="Total deformation over time" fontSize="8" fill="#222">
    <path d="M56 17.500 H651.500 V55.500" fill="none" stroke="#999" />
    {[1, 2, 3].map((t) => <path key={t} d={`M${px(t)} 18 V55`} stroke="#eee" />)}
    <path d="M54 55.500 H652 M56 39.500 H60" stroke="#777" />
    <path d="M60.500 56 V60 M134 56 V60 M208 56 V60 M282 56 V60 M356 56 V60 M430 56 V60 M503 56 V60 M577 56 V60 M651.500 56 V60" stroke="#888" />
    <polyline points={samples.map((s) => `${px(s.t)},${py(s.v)}`).join(" ")} fill="none" stroke="#555" />
    {samples.map((s) => (
      <g key={s.t} fill="#111">
        <rect x={px(s.t) - 1} y={py(s.v) - 1} width="2" height="2" />
        <rect x={px(s.t) - 1} y="54.500" width="2" height="2" />
      </g>
    ))}
    <rect x="156" y="13" width="2" height="43" fill="#000" />
    <text x="156" y="9" fontWeight="700">0.65306</text>
    <g textAnchor="end">
      <text x="52" y="21">179.98</text>
      <text x="52" y="43">75.</text>
      <text x="52" y="59">0.</text>
    </g>
    <g textAnchor="middle">
      <text x="61" y="70">0.</text>
      <text x="137" y="70">0.5</text>
      <text x="209" y="70">1.</text>
      <text x="286" y="70">1.5</text>
      <text x="357" y="70">2.</text>
      <text x="434" y="70">2.5</text>
      <text x="505" y="70">3.</text>
      <text x="582" y="70">3.5</text>
      <text x="648" y="70">4.</text>
      <text x="356" y="88" fontSize="9" fontWeight="700" fill="#000">[s]</text>
      <text transform="translate(25 35) rotate(-90)" fontSize="9" fontWeight="700" fill="#000">[mm]</text>
    </g>
    <path d="M60.500 94.500 H651.500 V104.500 H60.500Z M208.500 94.500 V104.500 M356.500 94.500 V104.500 M503.500 94.500 V104.500" fill="#fff" stroke="#aaa" />
    <g textAnchor="middle">
      {[1, 2, 3, 4].map((n) => <text key={n} x={60 + (n - 0.5) * 148} y="103">{n}</text>)}
    </g>
  </svg>
);

const GraphPanel = () => (
  <section className="flex min-w-0 flex-1 flex-col border-l border-[#888] bg-white">
    <PanelTitle>Graph</PanelTitle>
    <div className="flex h-[19px] shrink-0 items-center text-[8px]">
      <Sep w="w-1.5" />
      <span className="w-[43px]">Animation</span>
      <Tool w="w-[17px]" icon="pause" label="Pause" />
      <div className="relative">
        <Tool w="w-[17px]" icon="stop" label="Stop" />
        <svg viewBox="0 0 8 13" className="absolute left-2 top-1.5 h-[13px] w-2" aria-hidden="true">
          <path d="M.5 .5 V10 L3 8 L4.500 12 L6 11.500 L4.500 7.500 H7.500Z" fill="#fff" stroke="#222" />
        </svg>
      </div>
      <Sep w="w-[6px]" />
      <Tool w="w-[18px]" icon="frames" label="Distributed" off />
      <Tool w="w-[16px]" icon="frames2" label="Result sets" off />
      <Sep w="w-[6px]" />
      <Tool w="w-[18px]" icon="bulb" label="Highlight" />
      <select aria-label="Frames" className="w-[90px] appearance-none pl-[6px] text-[#777]"><option>50 Frames</option></select>
      <Drop w="w-2" off />
      <select aria-label="Duration" className="w-[94px] appearance-none pl-2.5"><option>5 Sec</option></select>
      <Drop w="w-2" />
      <Sep w="w-[10px]" />
      <Tool w="w-[17px]" icon="export" label="Export video" off />
      <Sep w="w-[6px]" />
      <Tool w="w-[18px]" icon="zoomTime" label="Zoom to range" off />
      <Sep w="w-[6px]" />
      <Tool w="w-[17px]" icon="cycles" label="Update" off />
      <span className="pl-1 text-[#777]">3 Cycles</span>
    </div>
    <Chart />
    <div className="flex h-4 items-start text-[8px]">
      <svg viewBox="0 0 18 14" className="h-3.5 w-[17px]" aria-hidden="true"><path d="M2 0 L15 13.500 H18" fill="none" stroke="#999" /></svg>
      <button type="button" className="h-3.5 border-b border-[#aaa]">Messages</button>
      <svg viewBox="0 0 8 14" className="h-3.5 w-2" aria-hidden="true"><path d="M0 0 L7 13.500 H8" fill="none" stroke="#aaa" /></svg>
      <button type="button" className="h-3.5 border-b border-r border-[#999] pr-1 font-bold text-black">Graph</button>
    </div>
  </section>
);

const rows = measured.map((v, i) => [i === 8 ? "1." : (0.2 + i * 0.1).toFixed(1), "0.", String(v)]);

const TabularData = () => (
  <section className="h-[163px] w-[214px] shrink-0 overflow-hidden border-l border-[#888] bg-white">
    <PanelTitle pin={false}>Tabular Data</PanelTitle>
    <table className="h-[148px] w-[230px] table-fixed border-collapse text-[8px] leading-[10px] text-[#222]">
      <colgroup>
        <col className="w-[14px]" />
        <col className="w-[38px]" />
        <col className="w-[81px]" />
        <col />
      </colgroup>
      <thead>
        <tr className="text-left">
          <th className="border border-[#999] p-0" />
          <th className="whitespace-nowrap border border-[#999] p-0 pl-0.5 font-normal">Time [s]</th>
          {["Minimum [mm]", "Maximum [mm]"].map((h) => (
            <th key={h} className="whitespace-nowrap border border-[#999] p-0 pl-0.5 font-normal">
              <label className="flex items-center gap-[3px]">
                <span className="grid">
                  <input type="checkbox" defaultChecked className="col-start-1 row-start-1 size-2.5 appearance-none border-l border-t border-[#999]" />
                  <svg viewBox="0 0 10 10" className="pointer-events-none col-start-1 row-start-1 size-2.5" aria-hidden="true">
                    <path d="M2 4.500 L4 7.500 L8 2" fill="none" stroke="#111" strokeWidth="1.600" />
                  </svg>
                </span>
                {h}
              </label>
            </th>
          ))}
        </tr>
      </thead>
      <tbody>
        {rows.map((r, i) => (
          <tr key={i}>
            <th className="border border-[#999] bg-white p-0 pl-0.5 text-left font-normal">{i + 1}</th>
            {r.map((c, j) => <td key={j} className="border border-[#ddd] bg-[#f9f8f5] p-0 pl-0.5">{c}</td>)}
          </tr>
        ))}
      </tbody>
    </table>
  </section>
);

const StatusBar = () => (
  <footer className="flex h-[11px] shrink-0 gap-0.5 overflow-hidden whitespace-nowrap bg-white text-[8px] leading-[12px] text-[#222]">
    <span className="w-[365px] border-t border-[#999]" />
    <span className="w-[175px] border-l border-t border-[#999]" />
    <span className="flex w-[148px] items-center border-l border-t border-[#999] pl-0.5"><Icon name="message" /><span className="pl-px">1 Message</span></span>
    <span className="flex-1 border-l border-t border-[#999] pl-0.5">No Selection</span>
    <span className="w-[84px] overflow-hidden border-l border-t border-[#999] pl-px">Metric (mm, kg, N, s, m</span>
  </footer>
);

export default function App() {
  return (
    <div className="flex h-screen flex-col overflow-hidden bg-black px-[87px] font-['Noto_Sans','Open_Sans',sans-serif] text-[#222]">
      <Toolbars />
      <main className="flex min-h-0 flex-1 bg-white">
        <aside className="flex w-[214px] shrink-0 flex-col pt-px">
          <Outline />
          <Details />
        </aside>
        <div className="flex min-w-0 flex-1 flex-col pl-1">
          <Viewport />
          <ViewTabs />
          <div className="mt-[6px] flex flex-1 gap-1">
            <GraphPanel />
            <TabularData />
          </div>
        </div>
      </main>
      <StatusBar />
    </div>
  );
}
